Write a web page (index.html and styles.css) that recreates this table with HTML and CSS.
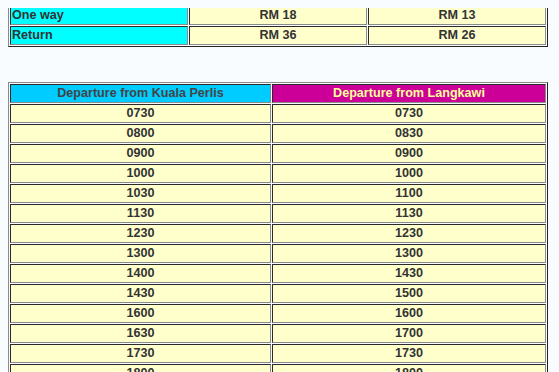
FILE: index.html
```html
<!DOCTYPE html>
<html>
<head>
<meta charset="utf-8">
<link rel="stylesheet" href="styles.css">
</head>
<body>
<table class="fare">
  <tr>
    <td class="c-type hd">Type</td>
    <td class="c-hd hd">Adult</td>
    <td class="c-hd hd">Child (3-12 years)</td>
  </tr>
  <tr>
    <td class="c-type">One way</td>
    <td class="c-val">RM 18</td>
    <td class="c-val">RM 13</td>
  </tr>
  <tr>
    <td class="c-type">Return</td>
    <td class="c-val">RM 36</td>
    <td class="c-val">RM 26</td>
  </tr>
</table>

<table class="sched">
  <tr>
    <th class="h-kp">Departure from Kuala Perlis</th>
    <th class="h-lk">Departure from Langkawi</th>
  </tr>
  <tr><td>0730</td><td>0730</td></tr>
  <tr><td>0800</td><td>0830</td></tr>
  <tr><td>0900</td><td>0900</td></tr>
  <tr><td>1000</td><td>1000</td></tr>
  <tr><td>1030</td><td>1100</td></tr>
  <tr><td>1130</td><td>1130</td></tr>
  <tr><td>1230</td><td>1230</td></tr>
  <tr><td>1300</td><td>1300</td></tr>
  <tr><td>1400</td><td>1430</td></tr>
  <tr><td>1430</td><td>1500</td></tr>
  <tr><td>1600</td><td>1600</td></tr>
  <tr><td>1630</td><td>1700</td></tr>
  <tr><td>1730</td><td>1730</td></tr>
  <tr><td>1800</td><td>1800</td></tr>
  <tr><td>1900</td><td>1900</td></tr>
</table>
</body>
</html>
```
FILE: styles.css
```css
html {
  background: #f8fcff;
  overflow: hidden;
}
body {
  margin: 8px;
  background: #f8fcff;
  font-family: "Liberation Sans", Arial, sans-serif;
  font-size: 12.6px;
  font-weight: bold;
  color: #333;
}
table {
  border-collapse: separate;
  border-spacing: 1px;
  border-style: solid;
  border-width: 1px;
  border-color: #8a8a8a #222 #222 #8a8a8a;
  width: 540px;
  table-layout: fixed;
}
td, th {
  border-style: solid;
  border-width: 1px;
  border-color: #2a2a2a #8a8a8a #8a8a8a #2a2a2a;
  padding: 1px 1px;
  line-height: 15px;
  height: 15px;
  font-weight: bold;
  white-space: nowrap;
  overflow: hidden;
}
.fare {
  margin-top: -24px;
}
.fare td {
  width: 33.3%;
}
.c-type {
  background: #00ffff;
  text-align: left;
}
.c-hd {
  background: #00ffff;
  text-align: center;
}
.hd {
  text-align: center;
}
.c-val {
  background: #ffffcc;
  text-align: center;
}
.sched {
  margin-top: 35px;
}
.sched td {
  background: #ffffcc;
  text-align: center;
}
.sched th {
  text-align: center;
}
.h-kp {
  width: 257px;
  background: #00ccff;
  color: #444;
}
.h-lk {
  background: #cc0099;
  color: #ffff99;
}
```
